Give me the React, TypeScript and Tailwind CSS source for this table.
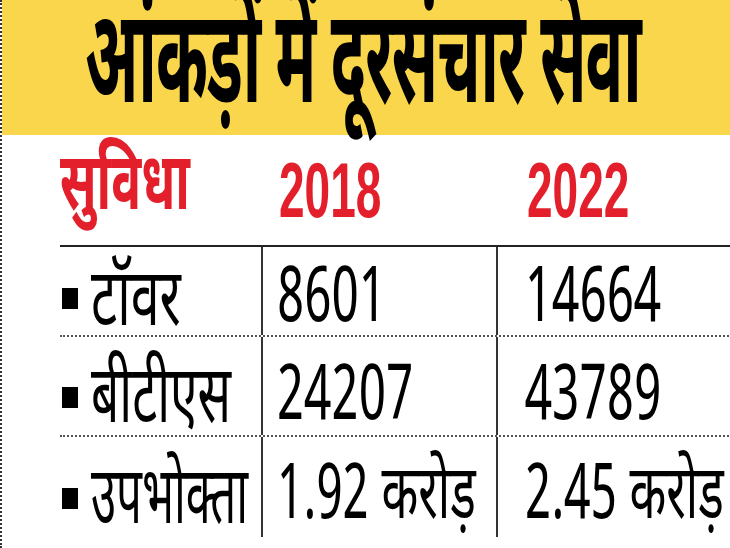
import React from "react";

const deva = { fontFamily: '"Noto Sans Devanagari", "Lohit Devanagari", "Noto Sans", "Liberation Sans", sans-serif' };

export default function App() {
  const rows = [
    { label: "टॉवर", a: "8601", b: "14664", h: "h-[90px]", pt: "pt-[22px]", lpt: "pt-[23px]", bm: "mt-[41px]", ls: "scale-x-[0.65]", vs: "scale-x-[0.65]" },
    { label: "बीटीएस", a: "24207", b: "43789", h: "h-[100px]", pt: "pt-[30px]", lpt: "pt-[30px]", bm: "mt-[50px]", ls: "scale-x-[0.62]", vs: "scale-x-[0.65]" },
    { label: "उपभोक्ता", a: "1.92 करोड़", b: "2.45 करोड़", h: "h-[100px]", pt: "pt-[29px]", lpt: "pt-[31px]", bm: "mt-[51px]", ls: "scale-x-[0.57]", vs: "scale-x-[0.63]" },
  ];
  return (
    <div className="w-[730px] h-[548px] bg-white overflow-hidden flex">
      <div className="w-[2px] h-full border-l-2 border-dotted border-[#333]" />
      <div className="flex-1 flex flex-col">
        <div className="h-[135px] bg-[#f9d64c] flex items-center pl-[83px] pt-[6px] whitespace-nowrap">
          <div className="w-[560px]">
            <span className="inline-block text-[132px] font-bold leading-[0.8] text-black tracking-[-2px] origin-left scale-x-[0.475]" style={deva}>
              आंकड़ों में दूरसंचार सेवा
            </span>
          </div>
        </div>
        <div className="h-[110px] flex items-center text-[#e21f2b] font-bold leading-[0.9] whitespace-nowrap">
          <div className="w-[261px] pl-[58px]">
            <span className="inline-block text-[80px] origin-left scale-x-[0.62]" style={deva}>सुविधा</span>
          </div>
          <div className="w-[235px] pl-[16px]">
            <span className="inline-block text-[78px] origin-left scale-x-[0.59]" style={{ fontFamily: '"Liberation Sans", sans-serif' }}>2018</span>
          </div>
          <div className="flex-1 pl-[29px]">
            <span className="inline-block text-[78px] origin-left scale-x-[0.59]" style={{ fontFamily: '"Liberation Sans", sans-serif' }}>2022</span>
          </div>
        </div>
        <div className="ml-[58px] border-t-2 border-[#222] flex-1 flex flex-col">
          {rows.map((r, i) => (
            <div key={i} className={`${r.h} flex whitespace-nowrap ${i < 2 ? "border-b-2 border-dotted border-[#555]" : ""}`}>
              <div className="w-[203px] flex items-start gap-[13px] pl-[2px] border-r-2 border-[#333]">
                <span className={`w-[16px] h-[21px] bg-black shrink-0 ${r.bm}`} />
                <span className={`inline-block text-[80px] leading-[0.9] text-black origin-left ${r.ls} ${r.lpt}`} style={deva}>{r.label}</span>
              </div>
              <div className="w-[235px] flex items-start pl-[14px] border-r-2 border-[#333]">
                <span className={`inline-block text-[76px] leading-[0.9] text-black origin-left ${r.vs} ${r.pt}`} style={deva}>{r.a}</span>
              </div>
              <div className="flex-1 flex items-start pl-[27px]">
                <span className={`inline-block text-[76px] leading-[0.9] text-black origin-left ${r.vs} ${r.pt}`} style={deva}>{r.b}</span>
              </div>
            </div>
          ))}
          <div className="h-[9px]" />
        </div>
      </div>
      <div className="w-[3px] h-full border-r-2 border-dotted border-[#555]" />
    </div>
  );
}
